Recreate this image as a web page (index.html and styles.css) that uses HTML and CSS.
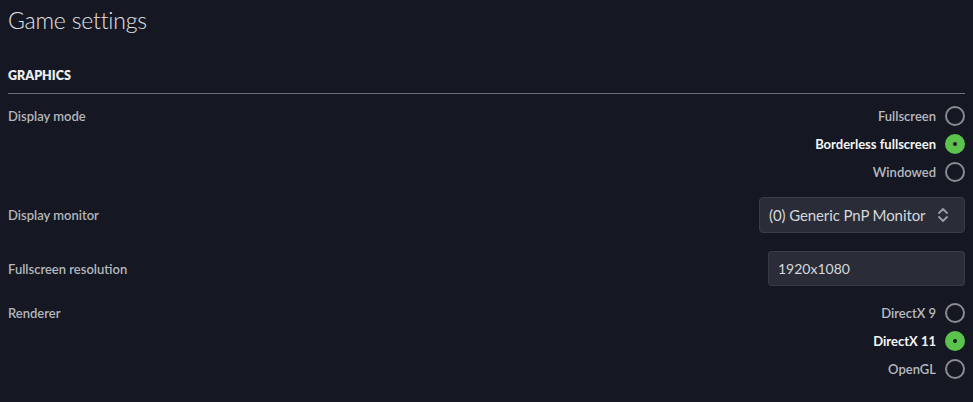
FILE: index.html
```html
<!DOCTYPE html>
<html>
<head>
<meta charset="utf-8">
<link rel="stylesheet" href="styles.css">
</head>
<body>
<div class="page">
  <h1 class="title">Game settings</h1>
  <h2 class="section">GRAPHICS</h2>
  <div class="divider"></div>
  <div class="rows">
    <div class="row row-top row-a">
      <div class="label">Display mode</div>
      <div class="radios">
        <div class="radio"><span class="radio-text">Fullscreen</span><span class="circle"></span></div>
        <div class="radio on"><span class="radio-text">Borderless fullscreen</span><span class="circle"></span></div>
        <div class="radio"><span class="radio-text">Windowed</span><span class="circle"></span></div>
      </div>
    </div>
    <div class="row row-b">
      <div class="label">Display monitor</div>
      <div class="select">
        <span class="select-text">(0) Generic PnP Monitor</span>
        <svg class="chev" width="12" height="16" viewBox="0 0 12 16"><path d="M2 6 L6 2 L10 6 M2 10 L6 14 L10 10" fill="none" stroke="#9a9ca2" stroke-width="1.8" stroke-linecap="round" stroke-linejoin="round"/></svg>
      </div>
    </div>
    <div class="row row-c">
      <div class="label">Fullscreen resolution</div>
      <div class="input">1920x1080</div>
    </div>
    <div class="row row-top row-c">
      <div class="label">Renderer</div>
      <div class="radios">
        <div class="radio"><span class="radio-text">DirectX 9</span><span class="circle"></span></div>
        <div class="radio on"><span class="radio-text">DirectX 11</span><span class="circle"></span></div>
        <div class="radio"><span class="radio-text">OpenGL</span><span class="circle"></span></div>
      </div>
    </div>
  </div>
</div>
</body>
</html>
```
FILE: styles.css
```css
html, body {
  margin: 0;
  padding: 0;
  background: #151823;
}
body {
  font-family: Lato, "Noto Sans", sans-serif;
  color: #b6b8be;
}
.page {
  padding: 5px 8px 8px 8px;
}
.title {
  margin: 0;
  font-size: 23px;
  font-weight: 300;
  letter-spacing: -0.2px;
  line-height: 30px;
  color: #e2e3e6;
}
.section {
  margin: 34px 0 0 0;
  font-size: 12.5px;
  font-weight: 800;
  line-height: 14px;
  color: #eceef0;
}
.divider {
  margin-top: 10px;
  height: 1px;
  background: #6d7078;
}
.rows {
  display: flex;
  flex-direction: column;
  margin-top: 4px;
}
.row {
  display: flex;
  justify-content: space-between;
  align-items: center;
}
.row-a { padding: 8px 0 7px; }
.row-b { padding: 8px 0 9px; }
.row-c { padding: 9px 0 8px; }
.row-top {
  align-items: flex-start;
}
.label {
  font-size: 13px;
  font-weight: 600;
  line-height: 20px;
  color: #b4b6bc;
}
.radios {
  display: flex;
  flex-direction: column;
  gap: 8px;
  align-items: flex-end;
}
.radio {
  display: flex;
  align-items: center;
  gap: 9px;
  height: 20px;
}
.radio-text {
  font-size: 13px;
  font-weight: 600;
  color: #b8bac0;
}
.radio.on .radio-text {
  color: #f4f5f7;
  font-weight: 700;
}
.circle {
  width: 20px;
  height: 20px;
  box-sizing: border-box;
  border-radius: 50%;
  border: 2px solid #8a8c92;
  position: relative;
}
.radio.on .circle {
  border: none;
  background: #5bc24b;
}
.radio.on .circle::after {
  content: "";
  position: absolute;
  left: 8px;
  top: 8px;
  width: 4px;
  height: 4px;
  border-radius: 50%;
  background: #151823;
}
.select {
  width: 206px;
  height: 36px;
  box-sizing: border-box;
  background: #2a2d37;
  border: 1px solid #383b45;
  border-radius: 4px;
  display: flex;
  align-items: center;
  justify-content: space-between;
  padding: 0 15px 0 9px;
}
.select-text {
  font-size: 15px;
  letter-spacing: -0.1px;
  color: #d6d8dc;
}
.chev {
  display: block;
}
.input {
  width: 197px;
  height: 35px;
  box-sizing: border-box;
  background: #2a2d37;
  border: 1px solid #383b45;
  border-radius: 3px;
  display: flex;
  align-items: center;
  padding: 0 9px;
  font-size: 14px;
  color: #d6d8dc;
}
```
